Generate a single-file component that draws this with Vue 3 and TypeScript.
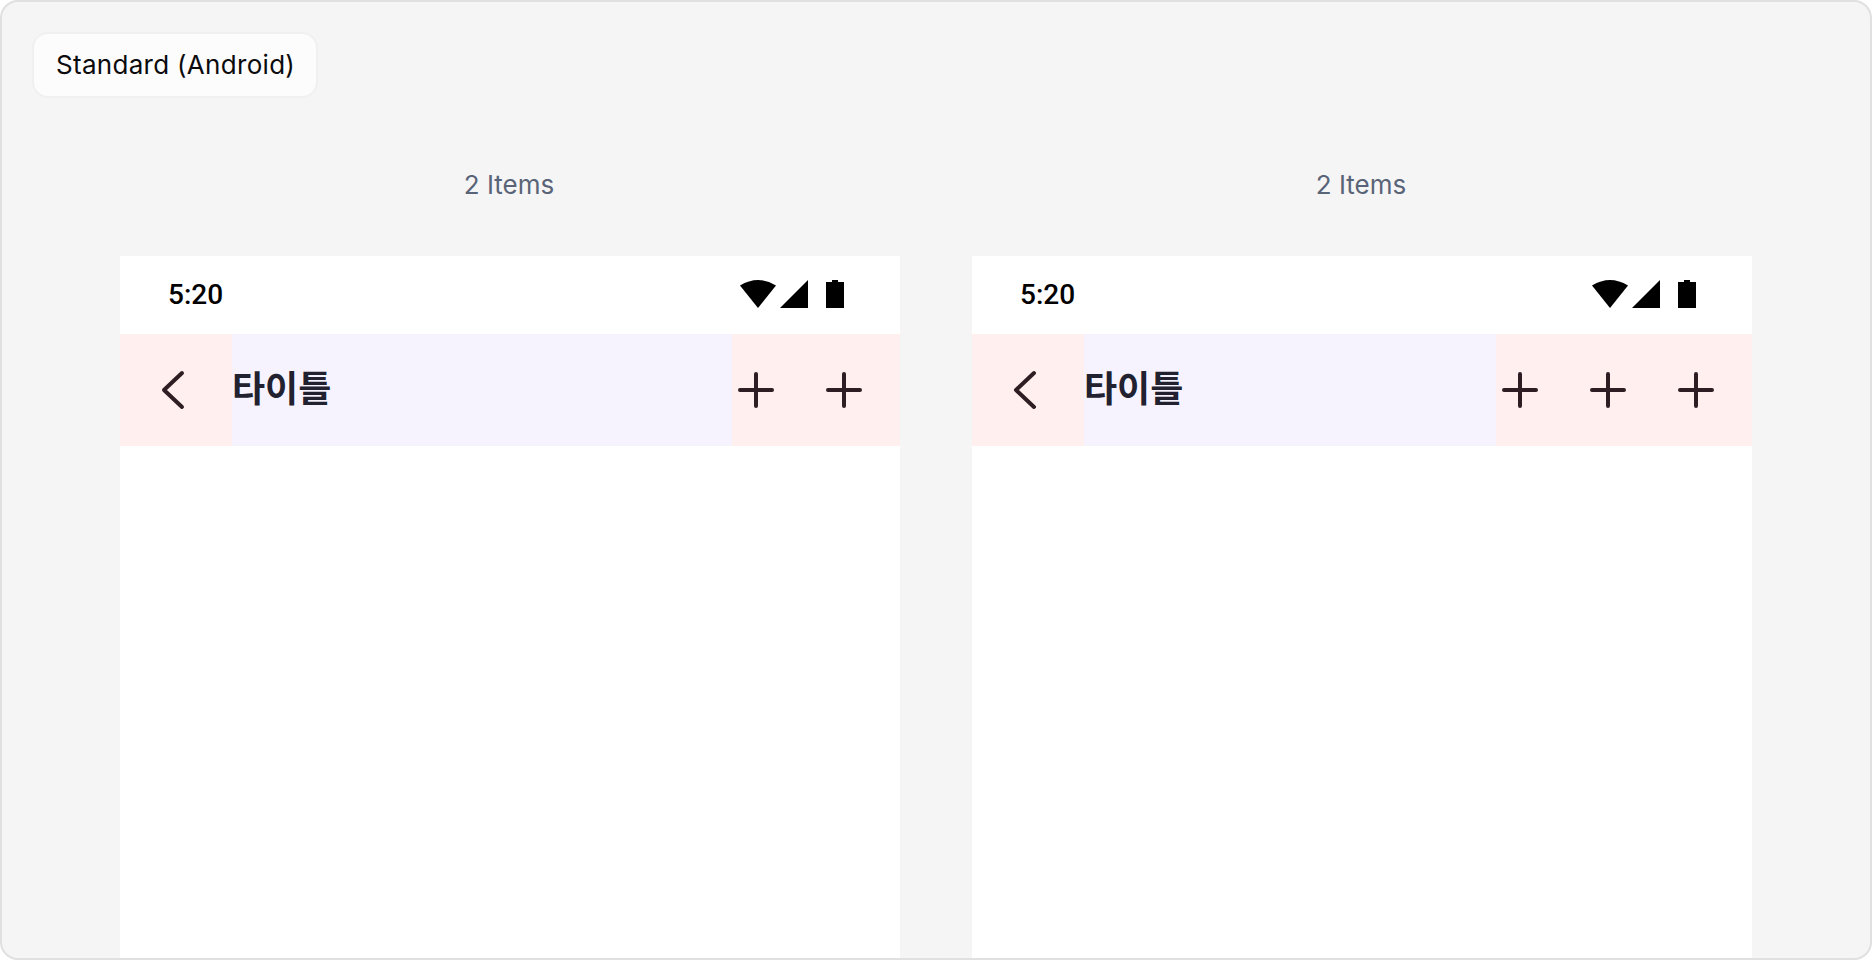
<template>
  <div class="board">
    <div class="badge">Standard (Android)</div>
    <div class="columns">
      <section v-for="col in columns" :key="col.id" class="column">
        <div class="column-label">{{ col.label }}</div>
        <div class="phone">
          <div class="status-bar">
            <span class="time">5:20</span>
            <svg class="status-icons" width="104" height="28" viewBox="0 0 104 28">
              <path d="M0 5.500Q18 -5.500 36 5.500L18 28Z" />
              <path d="M40 28 68 0v28Z" />
              <path d="M86 2h6V0h6v2h6v26H86Z" />
            </svg>
          </div>
          <div class="app-bar">
            <div class="leading">
              <svg width="36" height="44" viewBox="0 0 36 44" fill="none">
                <path d="M26 5 8 22l18 17" class="stroke" />
              </svg>
            </div>
            <div class="title">타이틀</div>
            <div class="actions">
              <svg v-for="n in col.actions" :key="n" width="36" height="36" viewBox="0 0 36 36" fill="none">
                <path d="M18 2v32M2 18h32" class="stroke" />
              </svg>
            </div>
          </div>
        </div>
      </section>
    </div>
  </div>
</template>

<script setup lang="ts">
interface Column {
  id: number
  label: string
  actions: number
}

const columns: Column[] = [
  { id: 1, label: '2 Items', actions: 2 },
  { id: 2, label: '2 Items', actions: 3 },
]
</script>

<style>
html, body { margin: 0; background: #fff; }
</style>

<style scoped>
.board {
  box-sizing: border-box;
  width: 1872px;
  height: 960px;
  overflow: hidden;
  padding: 30px 0 0 118px;
  background: #f5f5f5;
  border: 2px solid #e0e0e0;
  border-radius: 18px;
  font-family: Inter, "Noto Sans CJK KR", sans-serif;
}
.badge {
  box-sizing: border-box;
  width: 286px;
  height: 66px;
  margin-left: -88px;
  padding: 0 0 2px 22px;
  display: flex;
  align-items: center;
  font-size: 26px;
  letter-spacing: 0.3px;
  color: #0b0b0d;
  background: #fcfcfc;
  border: 2px solid #f0f0f0;
  border-radius: 16px;
}
.columns { display: flex; gap: 72px; margin-top: 66px; }
.column { width: 780px; }
.column-label {
  height: 41px;
  margin-bottom: 51px;
  padding-right: 2px;
  line-height: 41px;
  text-align: center;
  font-size: 26px;
  color: #5a6478;
}
.phone { background: #fff; height: 760px; }
.status-bar {
  box-sizing: border-box;
  height: 78px;
  display: flex;
  align-items: center;
  justify-content: space-between;
  padding: 0 56px 2px 48px;
}
.time { font-family: Roboto, sans-serif; font-weight: 500; font-size: 28px; color: #000; }
.status-icons { fill: #000; }
.app-bar { height: 112px; display: flex; background: #f6f3fe; }
.leading {
  width: 112px;
  display: flex;
  align-items: center;
  padding-left: 36px;
  box-sizing: border-box;
  background: #fff0ef;
}
.title {
  flex: 1;
  align-self: center;
  margin-bottom: 2px;
  font-size: 36px;
  font-weight: 700;
  line-height: 44px;
  color: #22212f;
}
.actions {
  display: flex;
  align-items: center;
  gap: 52px;
  padding: 0 38px 0 6px;
  background: #fff0ef;
}
.stroke { stroke: #2e1d22; stroke-width: 4; stroke-linecap: round; stroke-linejoin: round; }
</style>
